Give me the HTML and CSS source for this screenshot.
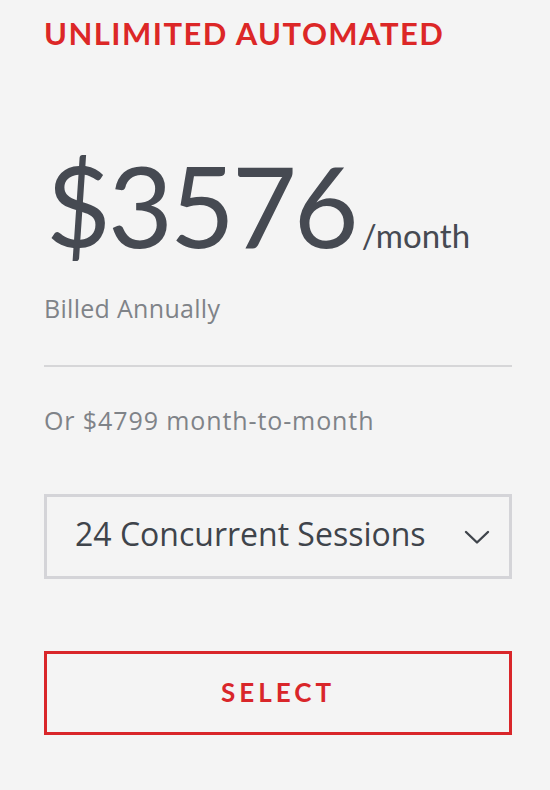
FILE: index.html
```html
<!DOCTYPE html>
<html>
<head>
<meta charset="utf-8">
<link rel="stylesheet" href="styles.css">
</head>
<body>
<div class="card">
  <h2 class="plan">UNLIMITED AUTOMATED</h2>
  <div class="price"><span class="amount">$3576</span><span class="per">/month</span></div>
  <div class="billed">Billed Annually</div>
  <hr class="divider">
  <div class="alt">Or $4799 month-to-month</div>
  <div class="select">
    <span class="select-text">24 Concurrent Sessions</span>
    <svg class="chev" width="26" height="15" viewBox="0 0 26 15"><path d="M2 2 L13 12.5 L24 2" fill="none" stroke="#3f444b" stroke-width="2.4" stroke-linecap="round" stroke-linejoin="round"/></svg>
  </div>
  <button class="btn">SELECT</button>
</div>
</body>
</html>
```
FILE: styles.css
```css
html, body {
  margin: 0;
  padding: 0;
  background: #f4f4f4;
}
body {
  font-family: Lato, "Open Sans", sans-serif;
  width: 550px;
  height: 790px;
  overflow: hidden;
}
.card {
  padding: 14px 38px 0 44px;
}
.plan {
  margin: 0;
  color: #dc2727;
  font-size: 31px;
  font-weight: 700;
  letter-spacing: 1.45px;
  line-height: 38px;
}
.price {
  margin-top: 97px;
  display: flex;
  align-items: baseline;
  color: #464a52;
  line-height: 1;
}
.amount {
  font-size: 112px;
  font-weight: 400;
  letter-spacing: -3px;
  margin-left: 2px;
}
.per {
  font-size: 33px;
  margin-left: 6px;
}
.billed {
  margin-top: 34px;
  color: #7f8388;
  font-family: "Open Sans", sans-serif;
  font-size: 25px;
  letter-spacing: 0.3px;
  line-height: 26px;
}
.divider {
  border: 0;
  border-top: 2px solid #d6d6d8;
  margin: 44px 0 0 0;
}
.alt {
  margin-top: 39px;
  color: #7f8388;
  font-family: "Open Sans", sans-serif;
  font-size: 25px;
  letter-spacing: 0.9px;
  line-height: 28px;
}
.select {
  margin-top: 60px;
  height: 85px;
  box-sizing: border-box;
  border: 3px solid #d4d4d8;
  display: flex;
  align-items: center;
  justify-content: space-between;
  padding: 0 19px 0 28px;
}
.select-text {
  color: #3f444b;
  font-family: "Open Sans", sans-serif;
  font-size: 32px;
  line-height: 40px;
  margin-bottom: 6px;
}
.chev {
  display: block;
  margin-top: 1px;
}
.btn {
  margin-top: 72px;
  width: 100%;
  height: 84px;
  background: transparent;
  border: 3px solid #d9262a;
  color: #d9262a;
  font-family: Lato, sans-serif;
  font-size: 26px;
  font-weight: 700;
  letter-spacing: 4px;
  padding: 0 0 3px 0;
}
```
